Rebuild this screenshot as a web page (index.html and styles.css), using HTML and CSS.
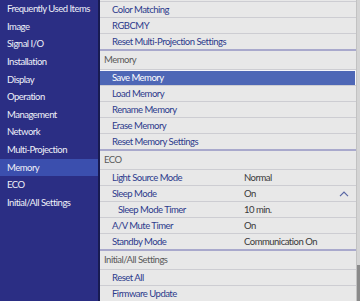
FILE: index.html
```html
<!DOCTYPE html>
<html lang="en">
<head>
  <meta charset="UTF-8">
  <title>Projector Menu</title>
  <meta name="viewport" content="width=device-width, initial-scale=1.0">
  <link rel="stylesheet" href="styles.css">
</head>
<body>
  <div class="menu-screen">
    <nav class="menu-side">
      <div class="side-item">Frequently Used Items</div>
      <div class="side-item">Image</div>
      <div class="side-item">Signal I/O</div>
      <div class="side-item">Installation</div>
      <div class="side-item">Display</div>
      <div class="side-item">Operation</div>
      <div class="side-item">Management</div>
      <div class="side-item">Network</div>
      <div class="side-item">Multi-Projection</div>
      <div class="side-item active">Memory</div>
      <div class="side-item">ECO</div>
      <div class="side-item">Initial/All Settings</div>
    </nav>
    <div class="menu-panel">
      <div class="menu-list">
        <div class="row">Color Matching</div>
        <div class="row">RGBCMY</div>
        <div class="row last">Reset Multi-Projection Settings</div>

        <div class="group-head">Memory</div>
        <div class="row selected">Save Memory</div>
        <div class="row">Load Memory</div>
        <div class="row">Rename Memory</div>
        <div class="row">Erase Memory</div>
        <div class="row last">Reset Memory Settings</div>

        <div class="group-head">ECO</div>
        <div class="row"><span class="label">Light Source Mode</span><span class="value">Normal</span></div>
        <div class="row">
          <span class="label">Sleep Mode</span><span class="value">On</span>
          <svg class="chevron" width="10" height="6" viewBox="0 0 10 6"><path d="M1 5.2 L5 1.2 L9 5.2" fill="none" stroke="#5866a4" stroke-width="1.2"/></svg>
        </div>
        <div class="row sub"><span class="label">Sleep Mode Timer</span><span class="value">10 min.</span></div>
        <div class="row"><span class="label">A/V Mute Timer</span><span class="value">On</span></div>
        <div class="row last"><span class="label">Standby Mode</span><span class="value">Communication On</span></div>

        <div class="group-head">Initial/All Settings</div>
        <div class="row">Reset All</div>
        <div class="row">Firmware Update</div>
      </div>
      <div class="scrollbar"><div class="thumb"></div></div>
    </div>
  </div>
</body>
</html>
```

FILE: styles.css
```css
body { margin: 0; background: #e8e8e8; font-family: Lato, "Liberation Sans", sans-serif; font-size: 9.5px; letter-spacing: -0.5px; }
.menu-screen { width: 360px; height: 301px; display: flex; overflow: hidden; }

.menu-side { width: 98px; background: #2b2e84; border-right: 2px solid #181b52; flex-shrink: 0; }
.side-item { height: 17.64px; line-height: 17.64px; padding-left: 7px; color: #eef0f8; white-space: nowrap; }
.side-item.active { background: #3b4fae; }

.menu-panel { flex: 1; display: flex; background: #e8e8e8; }
.menu-list { flex: 1; padding-top: 1px; }
.menu-list > .row:first-child { border-top: 1px solid #cdcdd2; }

.row {
  height: 15px; line-height: 15px; border-bottom: 1px solid #cdcdd2;
  padding-left: 12px; color: #2c3a8c; display: flex; align-items: center; white-space: nowrap;
}
.row.last { border-bottom: 2px solid #a9a9cc; }
.row.sub { padding-left: 18px; }
.row.selected { background: #4e67b6; color: #fff; box-shadow: inset 0 1px 0 #f6f6fa, inset -1px 0 0 #f6f6fa; }
.label { width: 132px; flex-shrink: 0; }
.row.sub .label { width: 126px; }
.value { color: #3a3a3a; flex: 1; }
.chevron { margin-right: 7px; }

.group-head {
  height: 18px; line-height: 18px; border-bottom: 1px solid #cdcdd2;
  padding-left: 4px; color: #5a5a5a;
}

.scrollbar { width: 3px; background: #d4d4d4; border-left: 1px solid #c2c2c2; display: flex; flex-direction: column; justify-content: flex-end; }
.thumb { height: 36px; background: #8a8a8a; }
```
